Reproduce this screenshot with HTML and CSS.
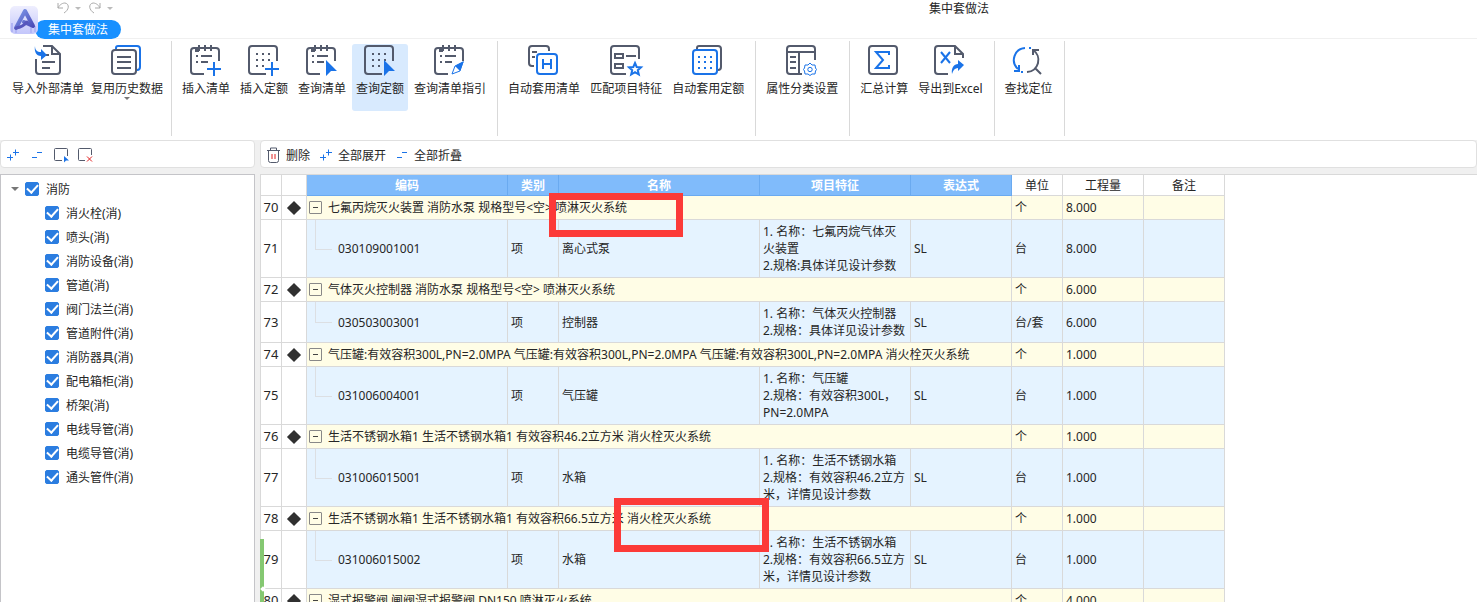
FILE: index.html
```
<!DOCTYPE html>
<html lang="zh-CN">

<head>
    <meta charset="UTF-8">
    <meta name="viewport" content="width=device-width, initial-scale=1.0">
    <title>集中套做法</title>
    <link rel="stylesheet" href="styles.css">
</head>

<body>
    <!-- shared icon shapes -->
    <svg class="sprite" aria-hidden="true">
        <symbol id="list-base" viewBox="0 0 30 30">
            <path d="M29 16V6a3 3 0 0 0-3-3H4a3 3 0 0 0-3 3v20a3 3 0 0 0 3 3h10M9 0v6M15 0v6M21 0v6M11 11h11M11 17h7M6 11h2M6 17h2" />
            <path d="M5 3h4v4H5z" class="solid" />
        </symbol>
        <symbol id="quota-base" viewBox="0 0 30 30">
            <path d="M29 16V4a3 3 0 0 0-3-3H4a3 3 0 0 0-3 3v22a3 3 0 0 0 3 3h14M8 9h2M14 9h2M20 9h2M8 15h2M14 15h2M20 15h2M8 21h2M14 21h2" />
        </symbol>
        <symbol id="plus" viewBox="0 0 30 30">
            <path d="M17 24h14M24 17v14" />
        </symbol>
        <symbol id="cursor" viewBox="0 0 30 30">
            <path d="M20 15l11 11h-6l-5 5z" class="solid" />
        </symbol>
        <symbol id="expand" viewBox="0 0 12 12">
            <path d="M6 3.500h6M8.500 .5v6M0 8.500h6M3.500 5.500v6" />
        </symbol>
        <symbol id="collapse" viewBox="0 0 12 12">
            <path d="M6 3.500h5M1 8.500h5" />
        </symbol>
    </svg>

    <div class="app">
        <header class="titlebar">
            <div class="brand">
                <svg class="logo" viewBox="0 0 28 28">
                    <defs>
                        <linearGradient id="logoBg" x1="0" y1="0" x2="0" y2="1">
                            <stop offset="0" stop-color="#eeeefe" />
                            <stop offset="1" stop-color="#c3c6fb" />
                        </linearGradient>
                        <linearGradient id="logoFg" x1="0" y1="0" x2="1" y2="1">
                            <stop offset="0" stop-color="#7f9bea" />
                            <stop offset="1" stop-color="#4947b5" />
                        </linearGradient>
                    </defs>
                    <rect width="28" height="28" rx="5" fill="url(#logoBg)" />
                    <path d="M2 17v9M6 22v5M21 17v10M25 20v6" stroke="#b1b5f5" stroke-width="2" />
                    <path d="M6 22L15 5l8 15-9-4" fill="none" stroke="url(#logoFg)" stroke-width="4" stroke-linejoin="round" stroke-linecap="round" />
                    <path d="M6 22q7-1 11-6" fill="none" stroke="#5756bd" stroke-width="3" stroke-linecap="round" />
                </svg>
                <div class="brand-side">
                    <div class="history">
                        <button aria-label="撤销"><svg viewBox="0 0 12 12"><path d="M1 1v5h5M1 6C3 2 6 1 8 1c5 1 4 7-1 10" /></svg></button>
                        <span class="caret light"></span>
                        <button aria-label="恢复"><svg viewBox="0 0 12 12"><path d="M11 1v5H6M11 6C9 2 6 1 4 1c-5 1-4 7 1 10" /></svg></button>
                        <span class="caret light"></span>
                    </div>
                    <button class="tab">集中套做法</button>
                </div>
            </div>
            <h1 class="title">集中套做法</h1>
        </header>

        <nav class="ribbon">
            <div class="group group-data">
                <button class="tool">
                    <svg viewBox="0 0 30 30">
                        <path d="M11 1h9l8 8v17a3 3 0 0 1-3 3H7a3 3 0 0 1-3-3V14M20 1v8h8M14 10h3M10 17h13M10 23h8" />
                        <path d="M3 1c0 4 2 6 6 6V4l6 6-6 5v-4C4 11 2 6 3 1z" class="solid blue" />
                    </svg>
                    <span>导入外部清单</span>
                </button>
                <button class="tool">
                    <svg viewBox="0 0 30 30">
                        <path d="M5 5V3a2 2 0 0 1 2-2h19a3 3 0 0 1 3 3v18a3 3 0 0 1-3 3" class="blue" />
                        <rect x="1" y="5" width="24" height="24" rx="3" />
                        <path d="M6 12h14M6 17h14M6 23h14" />
                    </svg>
                    <span>复用历史数据</span>
                    <i class="caret"></i>
                </button>
            </div>
            <div class="group">
                <button class="tool">
                    <svg viewBox="0 0 30 30"><use href="#list-base" /><use href="#plus" class="blue" /></svg>
                    <span>插入清单</span>
                </button>
                <button class="tool">
                    <svg viewBox="0 0 30 30"><use href="#quota-base" /><use href="#plus" class="blue" /></svg>
                    <span>插入定额</span>
                </button>
                <button class="tool">
                    <svg viewBox="0 0 30 30"><use href="#list-base" /><use href="#cursor" class="blue" /></svg>
                    <span>查询清单</span>
                </button>
                <button class="tool active">
                    <svg viewBox="0 0 30 30"><use href="#quota-base" /><use href="#cursor" class="blue" /></svg>
                    <span>查询定额</span>
                </button>
                <button class="tool">
                    <svg viewBox="0 0 30 30">
                        <use href="#list-base" />
                        <path d="M29 17l-3 9-8 3 3-8z" class="blue thin" />
                        <path d="M30 16l-4 10-5-5z" class="solid blue" />
                    </svg>
                    <span>查询清单指引</span>
                </button>
            </div>
            <div class="group">
                <button class="tool">
                    <svg viewBox="0 0 30 30">
                        <path d="M6 21H4a3 3 0 0 1-3-3V4a3 3 0 0 1 3-3h14a3 3 0 0 1 3 3v2M4 7h5M4 12h3" />
                        <rect x="9" y="9" width="20" height="20" rx="3" class="blue" />
                        <path d="M15 14v10M23 14v10M15 19h8" class="blue" />
                    </svg>
                    <span>自动套用清单</span>
                </button>
                <button class="tool">
                    <svg viewBox="0 0 30 30">
                        <path d="M29 14V4a3 3 0 0 0-3-3H4a3 3 0 0 0-3 3v22a3 3 0 0 0 3 3h12M16 11h10" />
                        <rect x="5" y="9" width="8" height="4" />
                        <rect x="5" y="19" width="8" height="4" />
                        <path d="M25 18l1.700 4 4.300.4-3.200 2.800 1 4.300-3.800-2.300-3.800 2.300 1-4.300-3.200-2.800 4.300-.4z" class="blue star" />
                    </svg>
                    <span>匹配项目特征</span>
                </button>
                <button class="tool">
                    <svg viewBox="0 0 30 30">
                        <path d="M5 4V3a2 2 0 0 1 2-2h19a3 3 0 0 1 3 3v18a3 3 0 0 1-3 3" />
                        <rect x="1" y="5" width="24" height="24" rx="3" class="blue" />
                        <path d="M6 12h2M12 12h2M18 12h2M6 17h2M12 17h2M18 17h2M6 23h2M12 23h2M18 23h2" class="blue" />
                    </svg>
                    <span>自动套用定额</span>
                </button>
            </div>
            <div class="group">
                <button class="tool">
                    <svg viewBox="0 0 30 30">
                        <path d="M29 15V4a3 3 0 0 0-3-3H4a3 3 0 0 0-3 3v22a3 3 0 0 0 3 3h12M1 7h28M13 7v22M4 12h6M4 17h6M4 23h6" />
                        <path d="M24 18l2 2 3 0 .5 3 1 1.500-1 1.500-.5 3h-3l-2 1.500-2-1.500h-3l-.5-3-1-1.500 1-1.500.5-3h3z" class="blue thin" />
                        <circle cx="24" cy="24.500" r="2.200" class="blue thin" />
                    </svg>
                    <span>属性分类设置</span>
                </button>
            </div>
            <div class="group">
                <button class="tool">
                    <svg viewBox="0 0 30 30">
                        <rect x="1" y="1" width="28" height="28" rx="3" />
                        <path d="M21 10V7H8l7 8-7 8h13v-3" class="blue" />
                    </svg>
                    <span>汇总计算</span>
                </button>
                <button class="tool">
                    <svg viewBox="0 0 30 30">
                        <path d="M14 29H4a3 3 0 0 1-3-3V4a3 3 0 0 1 3-3h17l8 8v4M21 1v8h8" />
                        <path d="M7 7l9 11M16 7L7 18" class="blue" />
                        <path d="M18 29c-1-6 2-10 6-10v-4l6 5-6 6v-3c-3 0-5 2-6 6z" class="solid blue" />
                    </svg>
                    <span>导出到Excel</span>
                </button>
            </div>
            <div class="group">
                <button class="tool">
                    <svg viewBox="0 0 30 30">
                        <path d="M12 3A12 12 0 0 0 5 24M1 26h5v-6M16 3h2M8 27h2" class="blue" />
                        <path d="M20 5a12 12 0 0 1-6 22M20 10V5h6M22 23l6 6" />
                    </svg>
                    <span>查找定位</span>
                </button>
            </div>
        </nav>

        <main class="workspace">
            <aside class="side">
                <div class="toolbar side-toolbar">
                    <button aria-label="展开"><svg class="mini blue" viewBox="0 0 12 12"><use href="#expand" /></svg></button>
                    <button aria-label="折叠"><svg class="mini blue" viewBox="0 0 12 12"><use href="#collapse" /></svg></button>
                    <button aria-label="选择">
                        <svg class="box-icon" viewBox="0 0 16 14">
                            <path d="M9 12.500H2.500a1 1 0 0 1-1-1v-10a1 1 0 0 1 1-1h11a1 1 0 0 1 1 1V8" />
                            <path d="M11 8l5 4.500h-3l-2 2z" class="solid blue" />
                        </svg>
                    </button>
                    <button aria-label="取消选择">
                        <svg class="box-icon" viewBox="0 0 16 14">
                            <path d="M8 12.500H2.500a1 1 0 0 1-1-1v-10a1 1 0 0 1 1-1h11a1 1 0 0 1 1 1V7" />
                            <path d="M10 8.500l5 5M15 8.500l-5 5" class="red" />
                        </svg>
                    </button>
                </div>
                <div class="tree">
                    <div class="node root"><i class="caret"></i><label><input type="checkbox" checked>消防</label></div>
                    <div class="node"><label><input type="checkbox" checked>消火栓(消)</label></div>
                    <div class="node"><label><input type="checkbox" checked>喷头(消)</label></div>
                    <div class="node"><label><input type="checkbox" checked>消防设备(消)</label></div>
                    <div class="node"><label><input type="checkbox" checked>管道(消)</label></div>
                    <div class="node"><label><input type="checkbox" checked>阀门法兰(消)</label></div>
                    <div class="node"><label><input type="checkbox" checked>管道附件(消)</label></div>
                    <div class="node"><label><input type="checkbox" checked>消防器具(消)</label></div>
                    <div class="node"><label><input type="checkbox" checked>配电箱柜(消)</label></div>
                    <div class="node"><label><input type="checkbox" checked>桥架(消)</label></div>
                    <div class="node"><label><input type="checkbox" checked>电线导管(消)</label></div>
                    <div class="node"><label><input type="checkbox" checked>电缆导管(消)</label></div>
                    <div class="node"><label><input type="checkbox" checked>通头管件(消)</label></div>
                </div>
            </aside>

            <section class="content">
                <div class="toolbar grid-toolbar">
                    <button>
                        <svg class="trash" viewBox="0 0 13 16">
                            <path d="M0 3.500h13M3.500 3V1h6v2M1.500 4v9.500a2 2 0 0 0 2 2h6a2 2 0 0 0 2-2V4" />
                            <path d="M5 7v5M8 7v5" class="red" />
                        </svg>
                        删除
                    </button>
                    <button><svg class="mini blue" viewBox="0 0 12 12"><use href="#expand" /></svg>全部展开</button>
                    <button><svg class="mini blue" viewBox="0 0 12 12"><use href="#collapse" /></svg>全部折叠</button>
                </div>
                <div class="grid">
                    <table>
                        <colgroup>
                            <col class="c-no">
                            <col class="c-mark">
                            <col class="c-code">
                            <col class="c-type">
                            <col class="c-name">
                            <col class="c-feature">
                            <col class="c-expr">
                            <col class="c-unit">
                            <col class="c-qty">
                            <col class="c-note">
                        </colgroup>
                        <thead>
                            <tr>
                                <th></th>
                                <th></th>
                                <th class="key">编码</th>
                                <th class="key">类别</th>
                                <th class="key">名称</th>
                                <th class="key">项目特征</th>
                                <th class="key">表达式</th>
                                <th>单位</th>
                                <th>工程量</th>
                                <th>备注</th>
                            </tr>
                        </thead>
                        <tbody>
                            <tr class="parent">
                                <td class="no">70</td>
                                <td class="mark"><i></i></td>
                                <td class="desc" colspan="5"><button class="fold" aria-label="折叠"></button>七氟丙烷灭火装置 消防水泵 规格型号&lt;空&gt; 喷淋灭火系统<b class="highlight first"></b></td>
                                <td>个</td>
                                <td>8.000</td>
                                <td></td>
                            </tr>
                            <tr class="child">
                                <td class="no">71</td>
                                <td class="mark"></td>
                                <td class="code">030109001001</td>
                                <td>项</td>
                                <td>离心式泵</td>
                                <td>1. 名称：七氟丙烷气体灭火装置<br>2.规格:具体详见设计参数</td>
                                <td>SL</td>
                                <td>台</td>
                                <td>8.000</td>
                                <td></td>
                            </tr>
                            <tr class="parent">
                                <td class="no">72</td>
                                <td class="mark"><i></i></td>
                                <td class="desc" colspan="5"><button class="fold" aria-label="折叠"></button>气体灭火控制器 消防水泵 规格型号&lt;空&gt; 喷淋灭火系统</td>
                                <td>个</td>
                                <td>6.000</td>
                                <td></td>
                            </tr>
                            <tr class="child">
                                <td class="no">73</td>
                                <td class="mark"></td>
                                <td class="code">030503003001</td>
                                <td>项</td>
                                <td>控制器</td>
                                <td>1. 名称：气体灭火控制器<br>2.规格：具体详见设计参数</td>
                                <td>SL</td>
                                <td>台/套</td>
                                <td>6.000</td>
                                <td></td>
                            </tr>
                            <tr class="parent">
                                <td class="no">74</td>
                                <td class="mark"><i></i></td>
                                <td class="desc" colspan="5"><button class="fold" aria-label="折叠"></button>气压罐:有效容积300L,PN=2.0MPA 气压罐:有效容积300L,PN=2.0MPA 气压罐:有效容积300L,PN=2.0MPA 消火栓灭火系统</td>
                                <td>个</td>
                                <td>1.000</td>
                                <td></td>
                            </tr>
                            <tr class="child">
                                <td class="no">75</td>
                                <td class="mark"></td>
                                <td class="code">031006004001</td>
                                <td>项</td>
                                <td>气压罐</td>
                                <td>1. 名称：气压罐<br>2.规格：有效容积300L，PN=2.0MPA</td>
                                <td>SL</td>
                                <td>台</td>
                                <td>1.000</td>
                                <td></td>
                            </tr>
                            <tr class="parent">
                                <td class="no">76</td>
                                <td class="mark"><i></i></td>
                                <td class="desc" colspan="5"><button class="fold" aria-label="折叠"></button>生活不锈钢水箱1 生活不锈钢水箱1 有效容积46.2立方米 消火栓灭火系统</td>
                                <td>个</td>
                                <td>1.000</td>
                                <td></td>
                            </tr>
                            <tr class="child">
                                <td class="no">77</td>
                                <td class="mark"></td>
                                <td class="code">031006015001</td>
                                <td>项</td>
                                <td>水箱</td>
                                <td>1. 名称：生活不锈钢水箱<br>2.规格：有效容积46.2立方米，详情见设计参数</td>
                                <td>SL</td>
                                <td>台</td>
                                <td>1.000</td>
                                <td></td>
                            </tr>
                            <tr class="parent">
                                <td class="no">78</td>
                                <td class="mark"><i></i></td>
                                <td class="desc" colspan="5"><button class="fold" aria-label="折叠"></button>生活不锈钢水箱1 生活不锈钢水箱1 有效容积66.5立方米 消火栓灭火系统<b class="highlight second"></b></td>
                                <td>个</td>
                                <td>1.000</td>
                                <td></td>
                            </tr>
                            <tr class="child">
                                <td class="no current">79</td>
                                <td class="mark"></td>
                                <td class="code">031006015002</td>
                                <td>项</td>
                                <td>水箱</td>
                                <td>1. 名称：生活不锈钢水箱<br>2.规格：有效容积66.5立方米，详情见设计参数</td>
                                <td>SL</td>
                                <td>台</td>
                                <td>1.000</td>
                                <td></td>
                            </tr>
                            <tr class="parent">
                                <td class="no">80</td>
                                <td class="mark"><i></i></td>
                                <td class="desc" colspan="5"><button class="fold" aria-label="折叠"></button>湿式报警阀 闸阀湿式报警阀 DN150 喷淋灭火系统</td>
                                <td>个</td>
                                <td>4.000</td>
                                <td></td>
                            </tr>
                        </tbody>
                    </table>
                </div>
            </section>
        </main>
    </div>
</body>

</html>
```
FILE: styles.css
```
:root {
    --ink: #535a6c;
    --blue: #1a73e8;
    --line: #d9d9d9;
    --text: #262626;
}

* {
    box-sizing: border-box;
}

body {
    margin: 0;
    font-family: "Noto Sans", "Noto Sans CJK SC", sans-serif;
    font-size: 12px;
    line-height: 17px;
    color: var(--text);
    background: #fff;
}

button {
    font: inherit;
    color: inherit;
    background: none;
    border: none;
    padding: 0;
    cursor: pointer;
}

svg {
    display: block;
    fill: none;
    stroke: var(--ink);
    overflow: visible;
}

symbol {
    overflow: visible;
}

.sprite {
    position: absolute;
    width: 0;
    height: 0;
}

.blue {
    stroke: var(--blue);
}

.red {
    stroke: #e02020;
}

.thin {
    stroke-width: 1px;
}

.star {
    stroke-width: 2px;
}

.solid {
    fill: var(--ink);
    stroke: none;
}

.solid.blue,
#cursor .solid {
    fill: var(--blue);
}

.caret {
    width: 0;
    height: 0;
    border: 3px solid transparent;
    border-top-color: #777;
    border-bottom: none;
}

.caret.light {
    border-top-color: #bbb;
}

.app {
    height: 100vh;
    display: flex;
    flex-direction: column;
    overflow: hidden;
}

/* title bar */
.titlebar {
    display: flex;
    height: 39px;
    flex: none;
    border-bottom: 1px solid #f0f0f0;
}

.brand {
    display: flex;
    width: 441px;
    padding-left: 10px;
}

.logo {
    width: 28px;
    height: 28px;
    margin-top: 6px;
    stroke: none;
    z-index: 1;
}

.brand-side {
    margin-left: -3px;
}

.history {
    display: flex;
    align-items: center;
    gap: 6px;
    height: 20px;
    padding: 0 0 4px 22px;
}

.history svg {
    width: 12px;
    height: 12px;
    stroke: #aaa;
}

.history .caret + button {
    margin-left: 2px;
}

.tab {
    display: block;
    height: 19px;
    padding: 0 13px;
    border-radius: 10px;
    background: #1890ff;
    color: #fff;
}

.title {
    flex: 1;
    margin: 0;
    font-size: 12px;
    font-weight: normal;
    text-align: center;
}

/* ribbon */
.ribbon {
    display: flex;
    flex: none;
    height: 101px;
    padding: 2px 0 4px;
}

.group {
    display: flex;
    align-items: flex-start;
    gap: 2px;
    padding: 3px 7px 0 6px;
    border-right: 1px solid var(--line);
}

.group-data {
    gap: 1px;
    padding: 3px 5px 0 9px;
}

.tool {
    display: flex;
    flex-direction: column;
    align-items: center;
    height: 67px;
    padding: 1px 4px 0;
    border-radius: 3px;
    white-space: nowrap;
}

.group-data .tool {
    padding: 1px 3px 0;
}

.tool svg {
    width: 30px;
    height: 30px;
    margin: 0 2px 5px 0;
    stroke-width: 2px;
}

.tool.active {
    background: #d8eafe;
}

/* workspace */
.workspace {
    display: flex;
    flex: 1;
    gap: 5px;
    min-height: 0;
    background: #f0f0f0;
}

.side {
    display: flex;
    flex-direction: column;
    flex: none;
    width: 255px;
}

.content {
    display: flex;
    flex-direction: column;
    flex: 1;
    min-width: 0;
}

.toolbar {
    display: flex;
    align-items: center;
    flex: none;
    height: 28px;
    margin-bottom: 6px;
    padding-top: 2px;
    background: #fff;
    border: 1px solid #e0e0e0;
    border-radius: 4px;
}

.toolbar button {
    display: flex;
    align-items: center;
    gap: 6px;
    white-space: nowrap;
}

.side-toolbar button {
    justify-content: center;
    width: 24px;
}

.grid-toolbar {
    gap: 10px;
    padding-left: 6px;
}

.mini {
    width: 12px;
    height: 12px;
}

.box-icon {
    width: 16px;
    height: 14px;
}

.trash {
    width: 13px;
    height: 16px;
}

.tree {
    flex: 1;
    padding-top: 2px;
    background: #fff;
    border: 1px solid #c4c4c8;
    border-bottom: none;
}

.node {
    display: flex;
    align-items: center;
    height: 24px;
    padding-left: 44px;
}

.node.root {
    gap: 6px;
    padding-left: 10px;
}

.root .caret {
    border-width: 4px;
    border-bottom: none;
}

.node label {
    display: flex;
    align-items: center;
    gap: 7px;
}

.node input {
    display: grid;
    place-items: center;
    appearance: none;
    width: 14px;
    height: 14px;
    margin: 0;
    border: 1px solid #2b7de0;
    border-radius: 2px;
}

.node input:checked {
    background: #2b7de0;
}

.node input:checked::after {
    content: "";
    width: 5px;
    height: 9px;
    margin-top: -3px;
    border: solid #fff;
    border-width: 0 2px 2px 0;
    transform: rotate(42deg);
}

/* data grid */
.grid {
    flex: 1;
    min-height: 0;
    overflow: hidden;
    background: #fff;
    border-top: 1px solid var(--line);
    position: relative;
}

table {
    table-layout: fixed;
    width: 965px;
    border-collapse: separate;
    border-spacing: 0;
    border-left: 1px solid var(--line);
}

.c-no { width: 21px; }
.c-mark { width: 25px; }
.c-code { width: 201px; }
.c-type { width: 51px; }
.c-name { width: 201px; }
.c-feature { width: 151px; }
.c-expr { width: 101px; }
.c-unit { width: 51px; }
.c-qty { width: 81px; }
.c-note { width: 81px; }

th,
td {
    padding: 3px;
    border-right: 1px solid var(--line);
    border-bottom: 1px solid var(--line);
    text-align: left;
}

th {
    height: 21px;
    padding: 0;
    font-weight: normal;
    text-align: center;
}

th.key {
    background: #80bbfb;
    border-color: #6aaaf0;
    color: #fff;
    font-weight: bold;
}

.parent td {
    height: 24px;
    padding: 0 3px;
    background: #fffde6;
}

.child td {
    background: #e5f3ff;
}

.parent .no,
.parent .mark,
.child .no,
.child .mark {
    padding: 0;
    background: #fff;
    text-align: center;
}

.no {
    font-size: 13px;
}

.mark i {
    display: block;
    width: 10px;
    height: 10px;
    margin: 0 auto;
    background: #303030;
    transform: rotate(45deg);
}

.parent .desc {
    position: relative;
    padding-left: 2px;
    white-space: nowrap;
}

.fold {
    display: inline-grid;
    place-items: center;
    width: 13px;
    height: 13px;
    margin-right: 6px;
    border: 1px solid #888;
    border-radius: 1px;
    vertical-align: top;
    margin-top: 2px;
}

.fold::before {
    content: "";
    width: 5px;
    height: 1px;
    background: #444;
}

.child .code {
    position: relative;
    padding-left: 31px;
}

/* branch line from the parent row */
.code::before {
    content: "";
    position: absolute;
    left: 8px;
    top: 0;
    width: 16px;
    height: 50%;
    border: solid #dcdfe3;
    border-width: 0 0 1px 1px;
}

.highlight {
    position: absolute;
    z-index: 2;
    border: 7px solid #fc3a38;
}

.highlight.first {
    left: 242px;
    top: -3px;
    width: 134px;
    height: 44px;
}

.highlight.second {
    left: 307px;
    top: -9px;
    width: 155px;
    height: 54px;
}

.current {
    position: relative;
}

.current::before {
    content: "";
    position: absolute;
    left: -1px;
    top: 8px;
    width: 4px;
    height: 100px;
    background: #85c872;
}

.current::after {
    content: "";
    position: absolute;
    left: 0;
    top: 56px;
    width: 4px;
    height: 4px;
    background: #fff;
    transform: rotate(45deg);
}
```
